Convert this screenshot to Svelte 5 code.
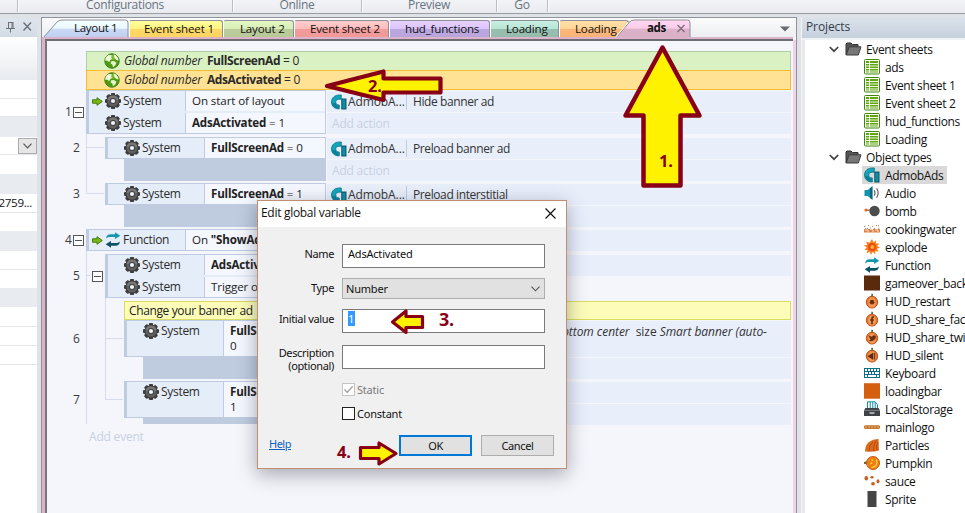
<script>
  const tabs = [
    { label: 'Event sheet 1', w: 94, top: '#ffff9c', mid: '#fff480', low: '#ffd968', bot: '#ffd25e', px: 14 },
    { label: 'Layout 2', w: 71, top: '#e3f6c4', mid: '#d8edb6', low: '#bacb9a', bot: '#b7c997', px: 16 },
    { label: 'Event sheet 2', w: 95, top: '#ffcccc', mid: '#ffbcbc', low: '#f29b9b', bot: '#ef9999', px: 15 },
    { label: 'hud_functions', w: 101, top: '#e6d2ff', mid: '#dcc4ff', low: '#bba8df', bot: '#b8a5dc', px: 15 },
    { label: 'Loading', w: 69, top: '#c6efe1', mid: '#b9e6d6', low: '#96beaf', bot: '#96bbae', px: 15 },
    { label: 'Loading', w: 70, top: '#ffe0a8', mid: '#ffd598', low: '#fbb679', bot: '#f9b377', px: 15 }
  ];
  const ribbon = [
    { label: '', w: 18 }, { label: 'Configurations', w: 215 }, { label: 'Online', w: 129 },
    { label: 'Preview', w: 135 }, { label: 'Go', w: 51 }
  ];
  const props = [
    [43, 'grad'], [19, 'line'], [18, 'line'], [20, 'cat'], [18, 'drop'], [19, 'plain'], [20, 'cat'],
    [19, 'value'], [18, 'plain'], [20, 'cat'], [19, 'line'], [18, 'plain'], [19, 'cat'],
    [20, 'line'], [19, 'line'], [19, 'line'], [149, 'plain']
  ];
  const blocks = [
    { n: 1, ind: 0, box: true, gap: 0, conds: [{ h: 22, go: true, o: 'System', t: 'On start of layout' }, { h: 22, o: 'System', b: 'AdsActivated', t: ' = 1' }],
      acts: [{ h: 21, t: 'Hide banner ad' }, { h: 21, add: true }], tail: 0 },
    { n: 2, ind: 1, gap: 3, conds: [{ h: 22, o: 'System', b: 'FullScreenAd', t: ' = 0' }],
      acts: [{ h: 21, t: 'Preload banner ad' }, { h: 21, add: true }], tail: 22 },
    { n: 3, ind: 1, gap: 2, conds: [{ h: 22, o: 'System', b: 'FullScreenAd', t: ' = 1' }],
      acts: [{ h: 21, t: 'Preload interstitial' }, { h: 21 }], tail: 22 },
    { n: 4, ind: 0, box: true, gap: 2, conds: [{ h: 22, go: true, fn: true, o: 'Function', t: 'On ', b2: '"ShowAds"' }],
      acts: [{ h: 21 }], tail: 0 },
    { n: 5, ind: 1, box: true, gap: 3, conds: [{ h: 22, o: 'System', b: 'AdsActivated', t: ' = 1' }, { h: 22, o: 'System', t: 'Trigger once' }],
      acts: [{ h: 21 }], tail: 0, comment: true },
    { n: 6, ind: 2, gap: 0, conds: [{ h: 37, o: 'System', b: 'FullScreenAd', t: ' =', l2: '0' }],
      acts: [{ h: 36, long: true }, { h: 21 }], tail: 22 },
    { n: 7, ind: 2, gap: 2, conds: [{ h: 37, o: 'System', b: 'FullScreenAd', t: ' =', l2: '1' }],
      acts: [{ h: 21 }, { h: 21 }], tail: 6 }
  ];
  const sheets = ['ads', 'Event sheet 1', 'Event sheet 2', 'hud_functions', 'Loading'];
  const objects = ['AdmobAds', 'Audio', 'bomb', 'cookingwater', 'explode', 'Function', 'gameover_back', 'HUD_restart',
    'HUD_share_facebook', 'HUD_share_twitter', 'HUD_silent', 'Keyboard', 'loadingbar', 'LocalStorage', 'mainlogo',
    'Particles', 'Pumpkin', 'sauce', 'Sprite', 'Sprite2'];
</script>

{#snippet gear()}
  <svg class="ic" width="16" height="16" viewBox="0 0 16 16">
    <g fill="#3c3c3c">
      <circle cx="8" cy="8" r="6.6" />
      {#each [0, 45, 90, 135] as a}
        <rect x="5.9" y="0" width="4.2" height="16" rx="1" transform="rotate({a} 8 8)" />
      {/each}
    </g>
    <circle cx="8" cy="8" r="5.6" fill="#5f5f5f" />
    <path d="M2.6 7A5.5 5.5 0 0 1 13.4 7Z" fill="#777" />
    <circle cx="8" cy="8" r="3.1" fill="#424242" />
    <circle cx="8" cy="8" r="2.1" fill="#eef3fa" />
  </svg>
{/snippet}

{#snippet globe()}
  <svg class="ic" width="16" height="16" viewBox="0 0 16 16">
    <circle cx="8" cy="8" r="7.2" fill="#4e9a12" stroke="#3c7c10" />
    <path d="M2 5.5A7 7 0 0 1 14 5.5Q8 8 2 5.5Z" fill="#79bd2e" />
    <path d="M2.5 3.5 5 1.8 8 2.4 7 4.3 8 5.8 6.3 7 5.2 9.3 3.2 7.6 1.2 8 1.5 5.5Z" fill="#f0f8dc" />
    <path d="M9.4 1.3 12 2.3 14 5 14.5 7.6 12.3 7 10.4 4.6Z" fill="#eff8da" />
    <path d="M7.2 8.3 10 8 12.4 9.8 11.2 12.6 9 14.3 8.3 11.6 6.6 10.4Z" fill="#e6f4cc" />
  </svg>
{/snippet}

{#snippet admob()}
  <svg class="ic" width="16" height="16" viewBox="0 0 16 16">
    <path d="M10.300 1C3.500.4.5 4 .5 8C.5 12 3.500 15 8.300 14.900V11C6 11 4.800 10 4.800 8C4.800 6 6.200 5 10.300 5.200Z" fill="#12a5ba" stroke="#0b7489" stroke-width=".8" />
    <path d="M.9 9C1.400 12.500 4 14.500 7.900 14.500V11.400C6 11.300 4.800 10.500 4.400 9Z" fill="#0b8299" />
    <rect x="10.800" y="5" width="4.200" height="10" fill="#0f8fa5" stroke="#064a5c" stroke-width=".9" />
  </svg>
{/snippet}

{#snippet func()}
  <svg class="ic" width="16" height="16" viewBox="0 0 16 16">
    <path d="M1.200 6.600C1.300 3.500 3 2.300 5.500 2.300H10V.2L15.300 3.700 10 7V5H6C3.600 5 2.400 5.400 1.200 6.600Z" fill="#1598ad" />
    <path d="M14.800 9.400C14.700 12.500 13 13.700 10.500 13.700H6V15.800L.7 12.300 6 9V11H10C12.400 11 13.600 10.600 14.800 9.400Z" fill="#0c5269" />
  </svg>
{/snippet}

{#snippet orb(kind)}
  <svg class="ic" width="16" height="16" viewBox="0 0 16 16">
    <path d="M7 4 7.500.5 9 1 8.800 4Z" fill="#4e6b38" />
    <ellipse cx="8" cy="9.200" rx="5.700" ry="5.900" fill="#e8762c" stroke="#bd571c" />
    <ellipse cx="8" cy="9.400" rx="3.700" ry="5" fill="#f49a56" />
    {#if kind === 'HUD_restart'}<circle cx="8" cy="9.200" r="2.400" fill="#70300f" />
    {:else if kind === 'HUD_silent'}<path d="M3.600 9.200 9.300 5.500V13Z" fill="#572b15" /><path d="M10.700 6V12.500" stroke="#572b15" />
    {:else if kind === 'HUD_share_twitter'}<path d="M4.500 6.200 7.800 7.800Q9 5.400 11.600 6.700L12 8Q10.700 13 4.500 12L6.500 10.800Z" fill="#673214" />
    {:else}<path d="M10 6H9Q8 6 8 7.500V13.200M6.200 9H9.800" stroke="#572b15" stroke-width="1.600" fill="none" />{/if}
  </svg>
{/snippet}

{#snippet objIcon(n)}
  {#if n === 'AdmobAds'}{@render admob()}
  {:else if n === 'Function'}{@render func()}
  {:else if n.startsWith('HUD')}{@render orb(n)}
  {:else}
    <svg class="ic" width="16" height="16" viewBox="0 0 16 16">
      {#if n === 'Audio'}
        <path d="M.5 5H3.700L8.400 1.200V14.800L3.700 11H.5Z" fill="#1393ad" /><path d="M6 3.200 8.400 1.200V14.800L6 12.900Z" fill="#0b6780" />
        <path d="M10.200 5.400Q11.800 8 10.200 10.600M12.600 3.400Q15.800 8 12.600 12.700" fill="none" stroke="#555" stroke-width="1.100" />
      {:else if n === 'bomb'}
        <circle cx="10.500" cy="8" r="5.200" fill="#4c4c4c" /><path d="M2 7.200H6" stroke="#777" stroke-width="1.400" /><circle cx="2" cy="7" r="1.600" fill="#ef641e" />
      {:else if n === 'cookingwater'}
        <path d="M0 8H16V11.500H0Z" fill="#dc8048" /><path d="M0 5.500H2M4 4.500H6M8 5.500H10M12 4.500H15M1 7.500H4M6 7H8M10 7.500H12M14 7H16" stroke="#b98a72" stroke-dasharray="1.200 .8" /><path d="M1 9H4M6 8.500H9M11 9H14M3 10H5M8 10H10M13 10H15" stroke="#f7e3d2" />
      {:else if n === 'explode'}
        <path d="M8 0 9.600 3.500 12 1.300 12 4.600 15.400 4.400 13.100 7 16 8.400 13 9.800 14.800 12.700 11.400 12 11.200 15.500 8.700 12.800 7 16 5.800 12.700 2.500 14.500 3.600 11 .3 10.800 2.800 8.400 0 6.400 3.300 5.800 2 2.500 5.500 3.800Z" fill="#f58220" /><circle cx="8" cy="8" r="4" fill="#ef4a16" /><circle cx="8.300" cy="8" r="2" fill="#ffb51e" />
      {:else if n === 'gameover_back'}<rect width="16" height="15" y=".5" fill="#592a0c" />
      {:else if n === 'loadingbar'}<rect width="16" height="15.500" y=".2" fill="#d4600f" />
      {:else if n === 'Keyboard'}
        <rect x=".5" y="3.500" width="15" height="9" fill="#fff" stroke="#0d6f86" /><path d="M0 6.500H16M0 9.500H16M3.500 3V6M6.500 3V6M9.500 3V6M12.500 3V6M4.500 6.500V9.500M7.500 6.500V9.500M10.500 6.500V9.500M3.500 9.500V13M12.500 9.500V13" stroke="#0d6f86" />
      {:else if n === 'LocalStorage'}
        <path d="M3.500 7V.8H11L13.500 3.500V7M6.200 1V7M8.800 1V7M11.200 1V7" fill="#fff" stroke="#118da4" /><path d="M1.500 7H14.500L16 9.500V15H0V9.500Z" fill="#3f4246" /><path d="M0 9.500H16" stroke="#75797d" /><path d="M5.500 12H10.500" stroke="#d8d8d8" stroke-width="1.400" />
      {:else if n === 'mainlogo'}<rect y="6.300" width="16" height="3.600" rx="1.400" fill="#c37a31" /><path d="M1 8H15" stroke="#e4a765" stroke-dasharray="2 1" />
      {:else if n === 'Particles'}
        <path d="M1 14.500Q1 8 5 5Q9 1.800 14.500 2L15 13.500Q10 15 5 14.800Z" fill="#dd6a1d" /><path d="M5 14Q5 8 9 5M9.500 14Q9 7 12.500 3.500M12.800 13Q12 8 14 5" stroke="#b14c10" fill="none" />
      {:else if n === 'Pumpkin'}
        <path d="M0 7 3 6V9L0 9Z" fill="#6b6b3a" /><circle cx="9" cy="8" r="6.500" fill="#ee7d18" stroke="#c75c0e" /><path d="M7.500 4.600 9 5.700M12 4.500Q14 7 11.800 10.500Q10 12.800 7.500 12.300M6.500 8.500 8.300 8" stroke="#ffd42c" stroke-width="1.300" fill="none" />
      {:else if n === 'sauce'}
        <g fill="#c65f24"><ellipse cx="2.300" cy="5.300" rx="1.800" ry="2.300" /><ellipse cx="8" cy="4.300" rx="1.600" ry="1.300" /><ellipse cx="9" cy="10.800" rx="1.900" ry="1.700" /><ellipse cx="14" cy="8.300" rx="1.500" ry="2.100" /></g>
      {:else if n === 'Sprite'}<rect x="3.500" y="0" width="9" height="16" fill="#454545" />{/if}
    </svg>
  {/if}
{/snippet}

<div class="app">
  <div class="ribbon">
    {#each ribbon as r}<div class="rg" style="width:{r.w}px">{r.label}</div>{/each}
  </div>
  <div class="main">
    <aside class="left">
      <div class="lhead">
        <svg width="37" height="19" viewBox="0 0 37 19" fill="none" stroke="#6b7077"><path d="M8.500 5V10M12 4.500V10M13 5V10M8 4.500H13.500M6 10.500H15M10.500 11V14.500" /><path d="M23.500 4.500 31 12.500M31 4.500 23.500 12.500" stroke-width="1.400" /></svg>
      </div>
      {#each props as [h, k]}
        <div class="pr {k}" style="height:{h}px">
          {#if k === 'drop'}<span class="dd"><svg width="9" height="6" viewBox="0 0 9 6"><path d="M.5.7 4.500 4.800 8.500.7" fill="none" stroke="#555" stroke-width="1.200" /></svg></span>{/if}
          {#if k === 'value'}<span>2759...</span>{/if}
        </div>
      {/each}
    </aside>

    <section class="editor">
      <div class="tabs">
        <div class="first"><svg width="87" height="19" viewBox="0 0 87 19"><defs><linearGradient id="blue" x1="0" y1="0" x2="0" y2="1"><stop offset="0" stop-color="#f4ffff" /><stop offset=".46" stop-color="#ebf8ff" /><stop offset=".5" stop-color="#cbdaf5" /><stop offset="1" stop-color="#bdcdee" /></linearGradient></defs><path d="M1 19 15 3Q17 1 20 1H83.500Q86 1 86 4V19" fill="url(#blue)" stroke="#8d9098" /></svg><span>Layout 1</span></div>
        {#each tabs as t}
          <div class="tab" style="width:{t.w}px;padding-left:{t.px}px;background:linear-gradient({t.top},{t.mid} 45%,{t.low} 50%,{t.bot})">{t.label}</div>
        {/each}
        <div class="active"><svg width="76" height="19" viewBox="0 0 76 19"><defs><linearGradient id="pink" x1="0" y1="0" x2="0" y2="1"><stop offset="0" stop-color="#ffd9f3" /><stop offset=".46" stop-color="#fbcbe9" /><stop offset=".5" stop-color="#ddb2ca" /><stop offset="1" stop-color="#d8b0c6" /></linearGradient></defs><path d="M1 19 14 3.500Q16 1 19 1H72.500Q75 1 75 4V19" fill="url(#pink)" stroke="#8d9098" /><path d="M0 19 13 3.500" stroke="#fff" /><path d="M62.500 6 69.500 13M69.500 6 62.500 13" stroke="#7d6d78" stroke-width="1.300" /></svg><b>ads</b></div>
        <svg class="more" width="10" height="6" viewBox="0 0 10 6"><path d="M0 .5H10L5 5.500Z" fill="#666a70" /></svg>
      </div>
      <div class="sheet">
        <div class="var green">{@render globe()}<i>Global number</i><b>FullScreenAd</b>&nbsp;= 0</div>
        <div class="var gold">{@render globe()}<i>Global number</i><b>AdsActivated</b>&nbsp;= 0</div>
        <svg class="lines" width="60" height="310" viewBox="0 0 60 310"><path d="M.5 0V59.500H18M.5 13.500H18M.5 116V290M.5 141.500H4M19.500 163V265.500H37M19.500 204.500H37" fill="none" stroke="#d3dbec" /></svg>
        {#each blocks as b}
          <div class="block" style="margin-top:{b.gap}px">
            <div class="gut i{b.ind}" style="height:{b.conds.reduce((s, c) => s + c.h, 0)}px">
              <span class="num">{b.n}</span>
              {#if b.box}<span class="minus"></span>{/if}
            </div>
            <div class="cwrap i{b.ind}">
              <div class="conds">
                {#each b.conds as c}
                  <div class="cond" style="height:{c.h}px">
                    <div class="who">
                      {#if c.go}<svg class="go" width="11" height="9" viewBox="0 0 11 9"><path d="M.5 2.800H5V.7L10.300 4.500 5 8.300V6.200H.5Z" fill="#7cb518" stroke="#3f7d0c" /></svg>{/if}
                      {#if c.fn}{@render func()}{:else}{@render gear()}{/if}<span>{c.o}</span>
                    </div>
                    <div class="what"><span>{#if c.b}<b>{c.b}</b>{/if}{c.t}{#if c.b2}<b>{c.b2}</b>{/if}{#if c.l2}<br />{c.l2}{/if}</span></div>
                  </div>
                {/each}
              </div>
              {#if b.tail}<div class="tail" style="height:{b.tail}px"></div>{/if}
            </div>
            <div class="acts">
              {#each b.acts as a}
                <div class="act" style="height:{a.h}px">
                  {#if a.t}{@render admob()}<span class="ao">AdmobA...</span><span class="at">{a.t}</span>
                  {:else if a.add}<span class="faint">Add action</span>
                  {:else if a.long}<span class="long"><i>Bottom center</i>&nbsp; size <i>Smart banner (auto-</i></span>{/if}
                </div>
              {/each}
            </div>
          </div>
          {#if b.comment}<div class="comment">Change your banner ad</div>{/if}
        {/each}
        <div class="faint addev">Add event</div>
      </div>
    </section>

    <aside class="projects">
      <div class="phead">Projects</div>
      <div class="tree">
        {#each [['Event sheets', sheets], ['Object types', objects]] as [title, items]}
          <div class="folder">
            <svg width="10" height="7" viewBox="0 0 10 7"><path d="M.8 1 5 5.200 9.200 1" fill="none" stroke="#444" stroke-width="1.700" /></svg>
            <svg width="17" height="14" viewBox="0 0 17 14"><path d="M1 13V2L2 1H6L7.500 2.500H13V5" fill="#555" stroke="#333" /><path d="M1.200 13 4.200 4.800H16L13.300 13Z" fill="#777" stroke="#3c3c3c" /></svg>
            <span>{title}</span>
          </div>
          {#each items as n}
            <div class="item"><span class="hit" class:sel={n === 'AdmobAds'}>
              {#if title === 'Event sheets'}
                <svg class="ic" width="16" height="16" viewBox="0 0 16 16"><rect x=".5" y=".5" width="15" height="14.500" rx="1" fill="#fff" stroke="#3f860c" /><rect x="2" y="2" width="12" height="11.500" fill="#5fa70e" /><path d="M2 4.500H14M2 7H14M2 9.500H14M2 12H14M5.500 2V14" stroke="#fff" stroke-width=".9" /></svg>
              {:else}{@render objIcon(n)}{/if}<span class="nm">{n}</span></span></div>
          {/each}
        {/each}
      </div>
    </aside>
  </div>

  <div class="dialog">
    <div class="title"><span>Edit global variable</span><svg width="11" height="11" viewBox="0 0 11 11"><path d="M.5.5 10.500 10.500M10.500.5.5 10.500" stroke="#111" stroke-width="1.200" /></svg></div>
    <div class="form">
      <div class="f" style="margin-top:17px"><span class="lab">Name</span><span class="inp">AdsActivated</span></div>
      <div class="f" style="margin-top:10px"><span class="lab">Type</span><span class="selbox">Number<svg width="9" height="6" viewBox="0 0 9 6"><path d="M.5.7 4.500 4.800 8.500.7" fill="none" stroke="#555" stroke-width="1.100" /></svg></span></div>
      <div class="f" style="margin-top:10px"><span class="lab">Initial value</span><span class="inp"><mark>1</mark></span></div>
      <div class="f two" style="margin-top:12px"><span class="lab">Description<br />(optional)</span><span class="inp"></span></div>
      <div class="chk off"><span class="cb"><svg width="11" height="11" viewBox="0 0 11 11"><path d="M1.500 5.500 4.200 8.300 9.700 2.300" fill="none" stroke="#a9a9a9" stroke-width="1.500" /></svg></span>Static</div>
      <div class="chk"><span class="cb"></span>Constant</div>
      <div class="foot"><span class="help">Help</span><span class="btn ok">OK</span><span class="btn">Cancel</span></div>
    </div>
  </div>

  <svg class="notes" width="965" height="513" viewBox="0 0 965 513">
    <g fill="#fff200" stroke="#880015" stroke-linejoin="round">
      <path stroke-width="4.500" d="M662.500 47.500 699.500 115.500H680.500V185.500H643.500V115.500H625.500Z" />
      <path stroke-width="4.200" d="M327 86 383.500 71.500V78.500H440.500V92.500H383.500V100Z" />
      <path stroke-width="3.200" d="M392.500 322 406 311V316.500H422.500V327.500H406V332.500Z" />
      <path stroke-width="3.200" d="M396 453.500 379 443V447.500H360.500V458.500H379V464Z" />
    </g>
    <g fill="#880015" font-family="'Open Sans', sans-serif" font-weight="700" font-size="16.500">
      <text x="659" y="167">1.</text><text x="368" y="92">2.</text><text x="439" y="326" font-size="18">3.</text><text x="337" y="458">4.</text>
    </g>
  </svg>
</div>

<style>
  :global(body) { margin: 0; overflow: hidden; }
  .app, .app * { box-sizing: border-box; }
  .app { position: relative; width: 965px; height: 513px; overflow: hidden; background: #dfe3e8; font: 11.6px/14px 'Open Sans', 'Noto Sans', sans-serif; color: #111; white-space: nowrap; letter-spacing: -0.25px; }
  .ic { flex: none; display: block; }
  .ribbon { height: 14px; display: flex; background: linear-gradient(#f1f3f6, #e9ebef); border-bottom: 1px solid #989da3; }
  .rg { border-right: 1px solid #b9bdc4; box-shadow: 1px 0 #fafbfc; text-align: center; color: #69737f; line-height: 9px; height: 12px; font-size: 12px; letter-spacing: -0.3px; }
  .main { display: flex; height: 499px; padding-top: 3px; }
  .left { width: 37px; margin-right: 4px; padding-top: 1px; }
  .lhead { height: 19px; background: linear-gradient(#dfe5ec, #d3dce6); }
  .pr { background: #fff; overflow: hidden; }
  .pr.grad { background: linear-gradient(#fff, #e8ebef); }
  .pr.cat { background: #e8ecf0; }
  .pr.line, .pr.drop, .pr.value { border-bottom: 1px solid #e3e6ea; }
  .pr.value { line-height: 17px; padding-right: 5px; display: flex; justify-content: flex-end; letter-spacing: -0.3px; }
  .pr.drop { display: flex; justify-content: flex-end; padding-top: 1px; }
  .dd { width: 19px; height: 16px; background: #e6e6e6; border: 1px solid #acacac; display: flex; align-items: center; justify-content: center; }

  .editor { width: 756px; border: 1px solid #8f949c; border-bottom: 0; background: #f5f5fa; display: flex; flex-direction: column; }
  .tabs { height: 19px; display: flex; background: linear-gradient(#fbfbfc, #eceef1); letter-spacing: -0.2px; }
  .first { width: 87px; position: relative; padding-left: 32px; line-height: 20px; letter-spacing: -0.35px; }
  .first svg, .active svg { position: absolute; left: 0; top: 1px; }
  .first span, .active b { position: relative; }
  .tab { margin-top: 2px; height: 18px; line-height: 15px; border: 1px solid #8d9098; border-left-color: #fff; border-bottom: 0; border-radius: 3px 3px 0 0; flex: none; }
  .active { position: relative; width: 76px; margin-left: -14px; line-height: 20px; padding-left: 32px; letter-spacing: -0.4px; }
  .more { margin: 8px 6px 0 auto; }
  .sheet { position: relative; margin: 0 3px 0 0; flex: 1; border-left: 3px solid #dcb3ca; border-top: 2px solid #dcb3ca; background: #f5f6fb; }
  .sheet::before { content: ''; display: block; height: 10px; border-top: 2px solid #6d6d72; }
  .sheet::after { content: ''; position: absolute; left: 0; top: 1px; bottom: 0; right: -3px; border-left: 2px solid #76767c; border-right: 3px solid #f3d1e7; pointer-events: none; }
  .var { margin-left: 41px; width: 705px; height: 20px; padding-left: 17px; display: flex; align-items: center; border: 1px solid; color: #2a2a2a; font-size: 12px; }
  .var .ic { margin-right: 4px; }
  .var i { margin-right: 5px; letter-spacing: -0.14px; }
  .var b { letter-spacing: -0.4px; }
  .green { background: #daf2c3; border-color: #aecfa4; margin-bottom: -1px; }
  .gold { background: #ffe294; border-color: #f2bd30; position: relative; }
  .lines { position: absolute; left: 41px; top: 95px; }
  .block { position: relative; display: flex; margin-left: 2px; }
  .gut { display: flex; align-items: center; flex: none; color: #3b3b3b; padding-left: 26px; font-size: 12px; }
  .gut.i0 { width: 39px; padding-left: 18px; }
  .gut.i1 { width: 58px; }
  .gut.i2 { width: 77px; }
  .num { width: 8px; flex: none; }
  .minus { width: 11px; height: 11px; border: 1px solid #555; background: linear-gradient(#555, #555) center / 7px 1px no-repeat #fff; flex: none; }
  .i1 .minus { margin-left: 11px; }
  .cwrap.i0 { width: 240px; }
  .cwrap.i1 { width: 221px; }
  .cwrap.i2 { width: 202px; }
  .cwrap { flex: none; }
  .conds { border: 1px solid #becbe0; border-left-width: 3px; background: #e5edf8; }
  .cond { display: flex; }
  .cond:first-child { margin-top: -1px; }
  .cond:last-child { margin-bottom: -1px; }
  .who { width: 96px; display: flex; align-items: flex-start; justify-content: flex-start; padding: 3px 0 0 16px; position: relative; }
  .who span { margin: 1px 0 0 2px; color: #2c2c2c; font-size: 12px; letter-spacing: -0.3px; }
  .go { position: absolute; left: 3px; top: 7px; }
  .what { flex: 1; margin: 1px 0; border-left: 1px solid #becbe0; padding: 2px 0 0 6px; background: #f4f7fe; color: #222; letter-spacing: -0.1px; }
  .what b { letter-spacing: -0.2px; }
  .what span { line-height: 15px; }
  .tail { margin-left: 19px; background: #bfcbdf; }
  .acts { flex: 1; margin: 1px 2px 0 1px; display: flex; flex-direction: column; gap: 1px; }
  .act { background: #e8effb; padding-left: 4px; display: flex; align-items: center; color: #333; font-size: 12px; flex: none; }
  .ao { width: 59px; margin-left: 1px; height: 17px; line-height: 17px; border-right: 1px solid #becbe0; font-size: 12px; letter-spacing: -0.1px; }
  .at { margin-left: 6px; letter-spacing: -0.4px; }
  .faint { color: #c8d0e2; font-size: 12px; padding-left: 1px; letter-spacing: -0.2px; }
  .long { align-self: flex-start; margin-left: 224px; line-height: 21px; color: #333; font-size: 12px; letter-spacing: -0.05px; }
  .comment { margin: 3px 0 0 79px; width: 667px; height: 19px; border: 1px solid #d9dc5e; background: #fdfdb9; line-height: 17px; padding-left: 4px; color: #222; font-size: 12px; letter-spacing: -0.37px; }
  .addev { margin: 5px 0 0 43px; }

  .projects { width: 164px; margin-left: 4px; flex: none; background: #e8eaee; padding-left: 3px; display: flex; flex-direction: column; border-left: 1px solid #f4f5f7; }
  .phead { height: 23px; line-height: 20px; margin-left: -3px; padding-left: 4px; background: linear-gradient(#dbe2ea, #c6d1de); color: #333d48; font-size: 12px; border-bottom: 2px solid #f0f2f4; letter-spacing: -0.1px; }
  .tree { flex: 1; background: #fff; font-size: 12px; overflow: hidden; letter-spacing: -0.35px; }
  .folder { height: 18px; display: flex; align-items: center; padding-left: 24px; }
  .folder svg { flex: none; margin-right: 6px; }
  .folder svg + svg { margin-right: 4px; }
  .folder span { padding-top: 1px; }
  .item { height: 18px; padding-left: 57px; display: flex; }
  .hit { display: flex; align-items: center; padding: 0 4px 0 2px; height: 18px; }
  .sel { background: #d9d9d9; }
  .nm { margin-left: 5px; padding-top: 1px; }

  .dialog { position: absolute; left: 257px; top: 200px; width: 310px; height: 269px; border: 1px solid #c28d70; background: #f0f0f0; box-shadow: 0 5px 18px rgba(50, 50, 70, .42); font: 11px/13px 'Noto Sans', 'Open Sans', sans-serif; letter-spacing: -0.2px; }
  .title { height: 26px; background: #fff; display: flex; justify-content: space-between; align-items: center; padding: 0 10px 2px 3px; font: 12px/16px 'Open Sans', sans-serif; letter-spacing: -0.3px; }
  .form { display: flex; flex-direction: column; }
  .f { display: flex; }
  .lab { width: 76px; text-align: right; margin-right: 8px; padding-top: 3px; letter-spacing: -0.35px; }
  .two .lab { padding-top: 1px; height: 24px; }
  .inp { width: 203px; height: 24px; background: #fff; border: 1px solid #7a7a7a; padding: 2px 5px; }
  mark { background: #3399ff; color: #fff; padding-right: 1px; }
  .selbox { width: 203px; height: 21px; background: #e1e1e1; border: 1px solid #adadad; padding: 0 4px 0 3px; display: flex; justify-content: space-between; align-items: center; }
  .chk { display: flex; align-items: center; margin: 14px 0 0 84px; height: 13px; }
  .off + .chk { margin-top: 11px; }
  .cb { width: 13px; height: 13px; border: 1px solid #222; background: #fff; margin-right: 2px; }
  .cb svg { display: block; }
  .off { color: #7a7a7a; }
  .off .cb { border-color: #c4c4c4; }
  .foot { display: flex; margin-top: 15px; }
  .help { width: 141px; flex: none; padding: 2px 0 0 11px; color: #0a62c4; text-decoration: underline; letter-spacing: -0.5px; }
  .btn { width: 73px; height: 21px; flex: none; border: 1px solid #adadad; background: #e1e1e1; display: flex; justify-content: center; align-items: center; margin-right: 9px; letter-spacing: -0.35px; }
  .ok { border: 2px solid #0078d7; }
  .notes { position: absolute; left: 0; top: 0; }
</style>
